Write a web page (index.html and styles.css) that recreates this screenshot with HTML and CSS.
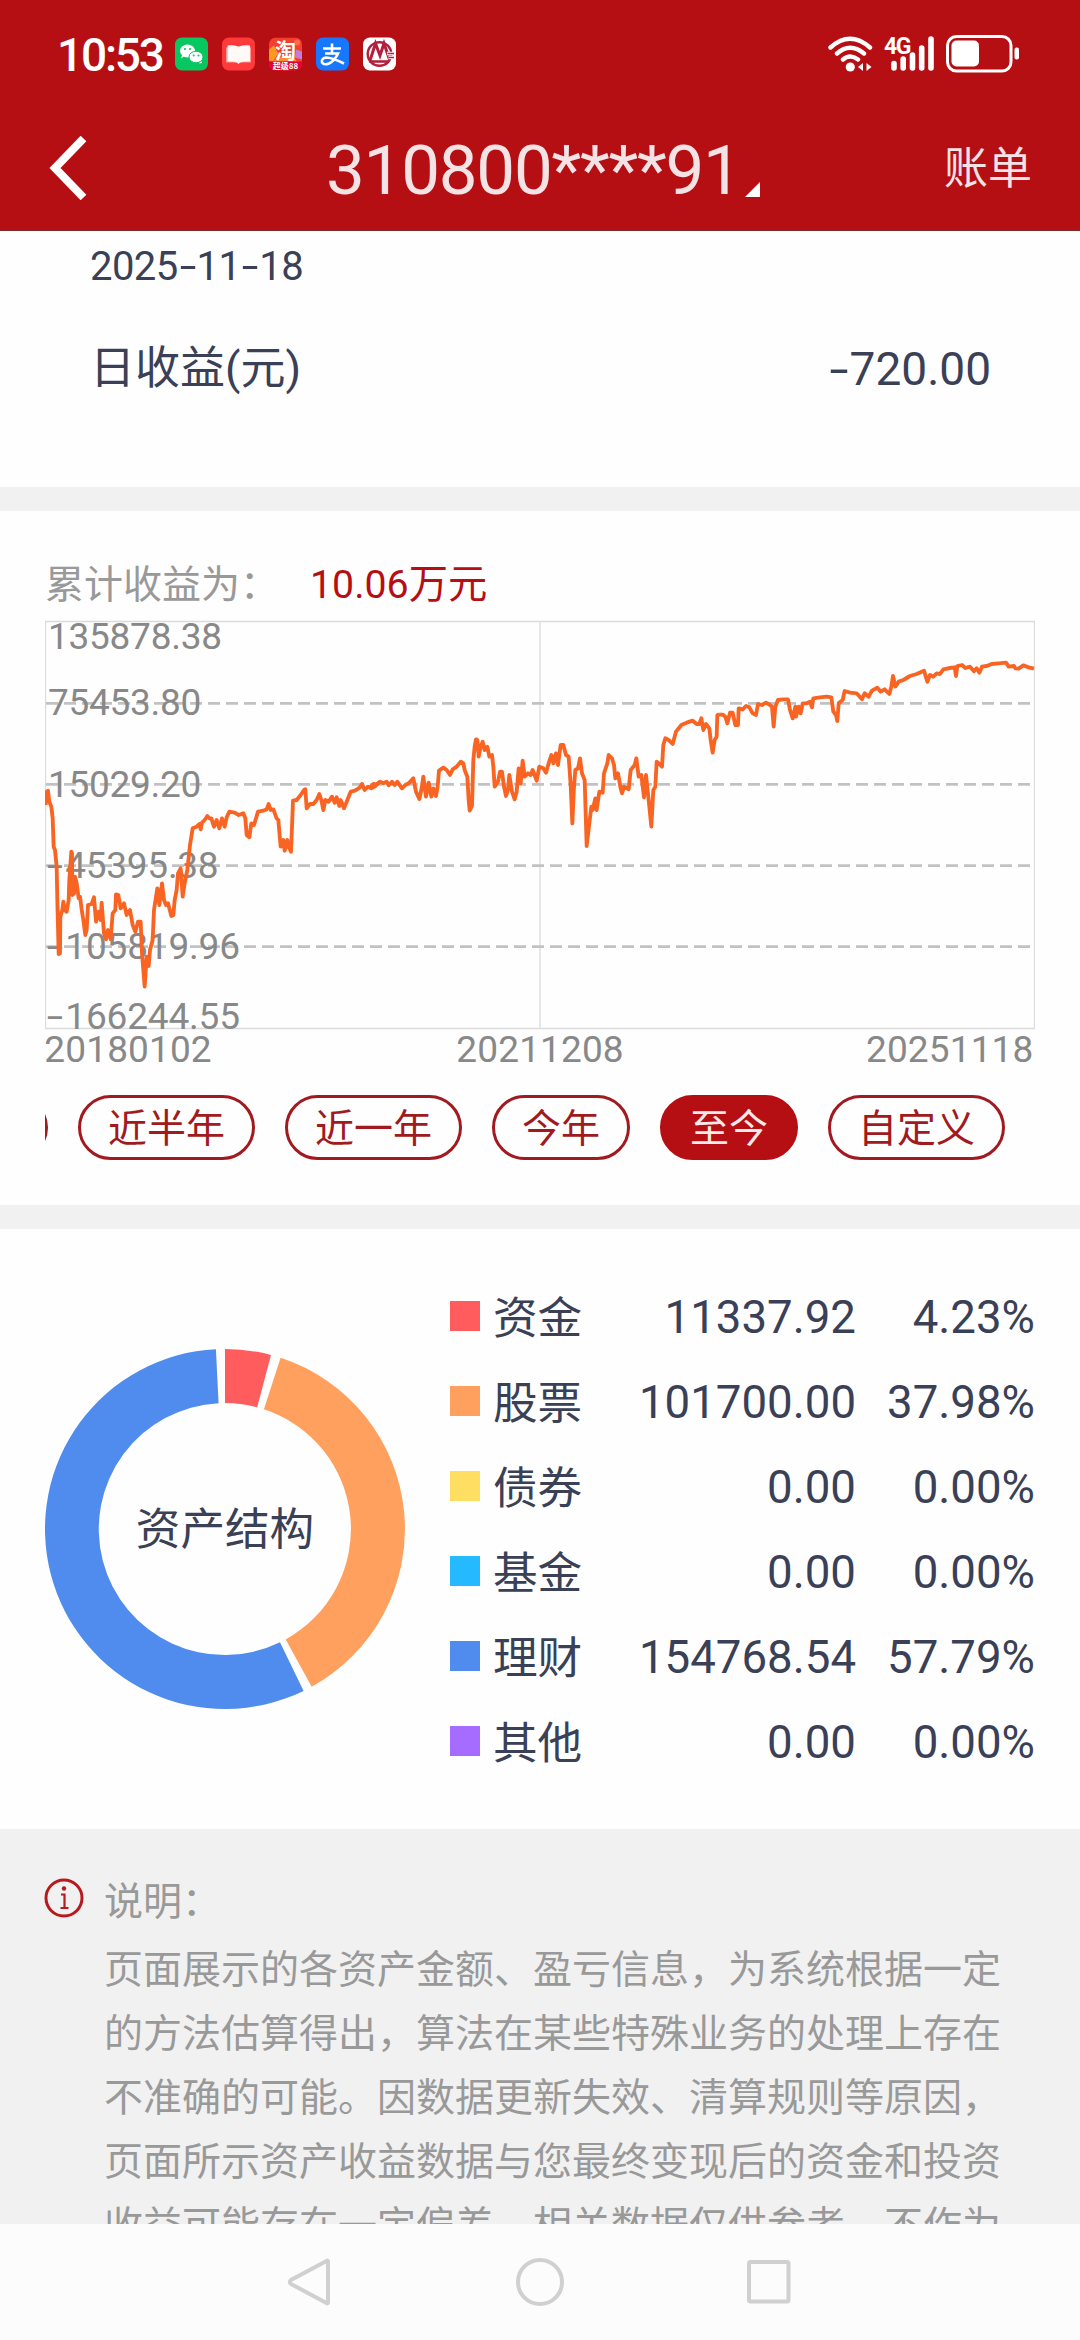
FILE: index.html
```html
<!DOCTYPE html>
<html lang="zh-CN">
<head>
<meta charset="utf-8">
<title>账户收益</title>
<link rel="stylesheet" href="styles.css">
</head>
<body>
<div class="screen">
  <div class="status">
    <span class="clock">10:53</span>
    <div class="apps">
      <svg class="app" viewBox="0 0 33 33"><rect width="33" height="33" rx="7" fill="#07c860"/><path d="M6 21l1.500-4h4zM24 26l3-.5-1-3z" fill="#fff"/><ellipse cx="12.500" cy="13.500" rx="7.500" ry="6.500" fill="#fff"/><ellipse cx="21" cy="19.500" rx="7" ry="5.800" fill="#fff" stroke="#07c860" stroke-width="1"/><g fill="#07c860"><circle cx="10" cy="11.500" r="1.100"/><circle cx="15" cy="11.500" r="1.100"/><circle cx="18.700" cy="18" r="1"/><circle cx="23.500" cy="18" r="1"/></g></svg>
      <svg class="app" viewBox="0 0 33 33"><rect width="33" height="33" rx="7" fill="#ff3a3a"/><path d="M4 10h25v15H4z" fill="#ff9a98"/><path d="M5.500 8q6-1 10 .8q1 .4 2 0Q22 7 28 8v16q-6-.5-10 1l-1.500 1.500L15 25q-4-1.500-9.500-1z" fill="#fffaf8"/></svg>
      <svg class="app" viewBox="0 0 33 33"><defs><clipPath id="r"><rect width="33" height="33" rx="7"/></clipPath></defs><g clip-path="url(#r)"><rect width="33" height="33" fill="#f2402e"/><path d="M0 12l5-4 4 8-5 8-4-1z" fill="#ff9a1f"/><path d="M27 12l6 2v8l-7-2z" fill="#c57ae0"/><path d="M9 20l14-2 5 6H4z" fill="#ff8a3c"/><circle cx="28" cy="5" r="3" fill="#ff6a4a"/><rect y="24" width="33" height="9" fill="#e5002f"/></g><text class="app-tao" x="16.500" y="20">淘</text><text class="app-tag" x="16.500" y="31.500">超级88</text></svg>
      <svg class="app" viewBox="0 0 33 33"><rect width="33" height="33" rx="7" fill="#1777ff"/><path d="M7 11h18M16 6v10M9 16h13q-3 7-9 10q-5 2-7-1q-1-4 4-5q6 0 18 6" fill="none" stroke="#fff" stroke-width="2.600"/></svg>
      <svg class="app" viewBox="0 0 33 33"><rect width="33" height="33" rx="7" fill="#fff"/><circle cx="16.500" cy="16.500" r="11.800" fill="none" stroke="#b4203c" stroke-width="2.400"/><path d="M7 23L12.500 6l4.500 12L21 6l5.500 16" fill="none" stroke="#b4203c" stroke-width="3"/><path d="M10 21l2.500-6 2.500 6" fill="#fff"/><path d="M6 24h20" stroke="#b4203c" stroke-width="2.600"/><path d="M24 16h9M25.500 20h7.500" stroke="#fff" stroke-width="3.400"/><path d="M24.500 16h6.500M25.500 20h5.500" stroke="#b4203c" stroke-width="1.400"/></svg>
    </div>
    <svg class="signals" viewBox="0 0 194 40">
      <g fill="none" stroke="#fff" stroke-width="4.400" stroke-linecap="round"><path d="M2.500 12.500Q22 -5 42 12.500M9 18.500Q22 7 36 18.500M15 24.500Q22 18.500 30 24.500"/></g>
      <circle cx="22.300" cy="32" r="4.600" fill="#fff"/>
      <path d="M30 32l5-4v8zM43.500 32l-5-4v8z" fill="#fff"/>
      <text class="net" x="56" y="18.500">4G</text>
      <path d="M66 28.500v4.500M75.200 24v9M84.500 20v13M93.700 13v20M103 4v29" stroke="#fff" stroke-width="5.600" stroke-linecap="round"/>
      <rect x="119.500" y="1.500" width="63.500" height="34.500" rx="9" fill="none" stroke="#fff" stroke-width="3"/>
      <rect x="123.500" y="5.500" width="27.500" height="26" rx="5" fill="#fff"/>
      <rect x="186.500" y="12.500" width="4.500" height="12" rx="2" fill="#fff"/>
    </svg>
  </div>
  <header class="header">
    <svg class="back" viewBox="0 0 40 64"><path d="M35.500 2.500L7 32l28.500 29.500" fill="none" stroke="#fff" stroke-width="8"/></svg>
    <h1 class="account">310800****91<svg class="corner" viewBox="0 0 15 15"><path d="M15 0v15H0z" fill="#fff"/></svg></h1>
    <span class="bill">账单</span>
  </header>

  <main class="content">
    <section class="daily">
      <div class="date">2025<span class="dash">-</span>11<span class="dash">-</span>18</div>
      <div class="daily-row"><span class="daily-label">日收益(元)</span><span class="daily-value"><span class="dash">-</span>720.00</span></div>
    </section>

    <section class="trend">
      <div class="total"><span class="total-label">累计收益为：</span><span class="total-value">10.06万元</span></div>
      <svg class="chart" viewBox="45 60 2970 1350">
        <path class="frame" d="M46.500 64.500H3013.500V1285.500H46.500zM1530 64.500V1285.500"/>
        <path class="grid" d="M48 310H3012M48 553H3012M48 797H3012M48 1040H3012"/>
        <g class="axis">
          <text x="54" y="147" textLength="522">135878.38</text>
          <text x="54" y="344" textLength="460">75453.80</text>
          <text x="54" y="590" textLength="460">15029.20</text>
          <text x="106" y="833" textLength="460">45395.38</text>
          <text x="106" y="1076" textLength="524">105819.96</text>
          <text x="106" y="1287" textLength="524">166244.55</text>
          <text x="43" y="1386" textLength="502">20180102</text>
          <text x="1279" y="1386" textLength="502">20211208</text>
          <text x="2508" y="1386" textLength="502">20251118</text>
          <text transform="translate(50 833) scale(1.600 1)">-</text>
          <text transform="translate(50 1076) scale(1.600 1)">-</text>
          <text transform="translate(50 1287) scale(1.600 1)">-</text>
        </g>
        <g class="line">
          <polyline points="47,615 50,575 54,572 58,605 64,620 68,655 71,740 75,750 80,800 82,900 86,1062 90,1060 91,950 97,930 100,905 104,930 110,935 116,900 118,840 124,755 126,760 127,885 132,880 135,830 140,850 146,895 150,890 156,935 160,960 166,1005 170,990 174,915 185,912 192,892 198,965 206,935 212,960 215,908 222,1000 228,1018 234,990 242,1018 248,940 256,930 258,883 265,885 272,925 282,910 290,945 300,930 308,975 316,995 324,965 332,965 336,1060 344,1160 350,1070 356,1098 360,1050 368,1020 372,930 382,865 388,915 396,850 402,900 408,915 414,910 424,948 430,945 434,900 440,870 444,820 452,805 458,890 464,850 472,810 480,735 488,685 500,680 508,672 512,688 516,668 524,660 532,648 538,655 544,655 552,680 560,660 568,685 576,655 584,680 590,652 598,635 614,638 626,645 640,640 646,655 650,705 658,712 664,670 672,675 684,635 700,632 710,628 716,612 722,630 730,628 740,655 745,660 752,740 760,720 764,752 772,720 778,745 783,755 786,680 789,602 800,600 812,585 822,570 826,568 830,625 840,612 850,612 860,600 868,582 874,600 880,630 886,600 896,605 906,590 914,608 920,592 928,618 932,600 942,625 950,605 962,575 975,572 990,562 996,552 1004,570 1014,560 1024,565 1036,558 1050,545"/>
          <polyline transform="translate(1020 0)" points="0,562 10,552 20,553 30,545 40,550 50,545 56,556 66,545 74,555 82,545 96,565 106,555 116,550 130,535 138,575 148,597 154,570 160,530 168,590 176,548 184,590 190,565 198,588 203,560 207,512 220,503 230,510 240,525 248,508 260,500 272,485 280,490 284,510 292,530 296,600 299,632 306,618 310,480 314,440 318,418 322,420 326,470 332,440 338,425 344,450 352,440 358,470 366,465 370,500 374,560 384,545 390,515 396,515 402,560 408,588 414,570 418,525 426,575 434,598 440,575 446,505 452,550 458,482 464,530 474,520 482,525 488,510 500,542 508,500 520,505 528,518 536,490 544,465 550,490 558,460 564,495 572,435 580,435 588,465 596,470 602,555 607,670 612,560 616,510 624,505 630,475 636,520 644,540 650,738 658,670 664,620 668,630 676,595 680,630 688,575 698,578 702,520 712,490 716,465 726,475 732,495 736,535 744,520 752,565 756,580 762,560 776,568 782,510 794,495 799,475 806,530 814,525 822,592 828,525 836,600 844,680 850,570 856,560 860,485 866,490 876,500 880,435 886,415 896,420 908,432 918,395 934,375 950,368 968,362 980,372 988,372 994,355 1000,390 1008,372 1018,385 1022,420 1028,458 1034,420 1040,410 1042,345 1050,343"/>
          <polyline transform="translate(2040 0)" points="30,343 40,345 46,350 52,370 60,338 68,338 76,375 84,375 86,325 98,328 108,318 118,322 128,340 138,345 144,312 156,315 168,308 180,315 186,320 191,380 196,320 204,300 220,298 234,298 240,330 248,355 256,320 258,350 266,320 272,340 278,310 290,310 300,305 306,322 310,295 330,292 350,290 364,292 370,335 378,345 382,363 386,310 398,300 404,273 420,278 440,280 456,298 464,280 476,290 486,272 502,263 512,275 524,268 538,282 544,260 549,228 556,260 566,245 580,240 600,228 620,222 642,212 652,245 660,225 670,230 680,220 690,222 700,208 720,204 734,202 738,228 742,198 756,195 766,204 780,200 792,214 800,205 808,218 816,200 830,198 845,192 866,190 888,188 896,200 912,198 916,205 926,206 940,196 956,202 972,206"/>
        </g>
      </svg>
      <div class="ranges">
        <span class="pill sliver"></span>
        <span class="pill">近半年</span>
        <span class="pill">近一年</span>
        <span class="pill">今年</span>
        <span class="pill active">至今</span>
        <span class="pill">自定义</span>
      </div>
    </section>

    <section class="assets">
      <div class="donut">
        <svg viewBox="-180 -180 360 360">
          <path fill="#ff5c5d" d="M0-180A180 180 0 0 1 46-174L32.200-121.800A126 126 0 0 0 0-126z"/>
          <path fill="#ffa05e" d="M55.600-171.200A180 180 0 0 1 86.700 157.700L60.700 110.400A126 126 0 0 0 38.900-119.800z"/>
          <path fill="#508ced" d="M78.600 161.900A180 180 0 1 1-9.100-179.800L-6.400-125.800A126 126 0 1 0 55 113.300z"/>
        </svg>
        <span class="donut-title">资产结构</span>
      </div>
      <div class="legend">
        <div class="item"><i class="swatch red"></i><span class="name">资金</span><span class="amount">11337.92</span><span class="share">4.23%</span></div>
        <div class="item"><i class="swatch orange"></i><span class="name">股票</span><span class="amount">101700.00</span><span class="share">37.98%</span></div>
        <div class="item"><i class="swatch yellow"></i><span class="name">债券</span><span class="amount">0.00</span><span class="share">0.00%</span></div>
        <div class="item"><i class="swatch cyan"></i><span class="name">基金</span><span class="amount">0.00</span><span class="share">0.00%</span></div>
        <div class="item"><i class="swatch blue"></i><span class="name">理财</span><span class="amount">154768.54</span><span class="share">57.79%</span></div>
        <div class="item"><i class="swatch purple"></i><span class="name">其他</span><span class="amount">0.00</span><span class="share">0.00%</span></div>
      </div>
    </section>

    <section class="notes">
      <svg class="info" viewBox="0 0 40 40"><circle cx="20" cy="20" r="18" fill="none" stroke="#b8191e" stroke-width="3"/><circle cx="20" cy="10.500" r="2.200" fill="#b8191e"/><path d="M17 16.500h3.500V30M16.500 30h8" fill="none" stroke="#b8191e" stroke-width="2.200"/></svg>
      <div class="notes-text">
        <div class="notes-title">说明：</div>
        <p>页面展示的各资产金额、盈亏信息，为系统根据一定<br>的方法估算得出，算法在某些特殊业务的处理上存在<br>不准确的可能。因数据更新失效、清算规则等原因，<br>页面所示资产收益数据与您最终变现后的资金和投资<br>收益可能存在一定偏差，相关数据仅供参考，不作为</p>
      </div>
    </section>
  </main>

  <nav class="nav">
    <svg viewBox="0 0 50 50"><path d="M42 4.500V45.500Q42 47 40.500 46L5 27Q2.500 25 5 23L40.500 4Q42 3 42 4.500z"/></svg>
    <svg viewBox="0 0 50 50"><circle cx="25" cy="25" r="22"/></svg>
    <svg viewBox="0 0 50 50"><rect x="5" y="5" width="39.500" height="39.500" rx="1.500"/></svg>
  </nav>
</div>
</body>
</html>
```
FILE: styles.css
```css
* { box-sizing: border-box; }
body { margin: 0; font-family: Roboto, "Noto Sans CJK SC", sans-serif; color: #3a4056; }
svg { display: block; }
.screen { width: 1080px; height: 2340px; display: flex; flex-direction: column; overflow: hidden; background: #fefefe; }

.status { height: 106px; flex: none; display: flex; align-items: flex-start; padding: 35px 58px 0 57px; background: #b50f14; color: #fff; }
.clock { width: 118px; font-size: 46px; font-weight: 500; line-height: 40px; letter-spacing: -2.200px; }
.apps { display: flex; gap: 14px; padding-top: 2px; flex: 1; }
.app { width: 33px; height: 34px; }
.app-tao { font: 700 21px "Noto Sans CJK SC", sans-serif; fill: #fff; text-anchor: middle; }
.app-tag { font: 700 8px "Noto Sans CJK SC", sans-serif; fill: #fff; text-anchor: middle; }
.signals { width: 194px; height: 40px; }
.net { font: 700 23px Roboto, sans-serif; fill: #fff; letter-spacing: -1.500px; }

.header { height: 125px; flex: none; display: flex; align-items: center; padding: 2px 48px 0 46px; background: #b50f14; border-bottom: 1px solid #7c2a2f; color: #f3e3e5; }
.back { width: 40px; height: 64px; margin: -3px 0 0 2px; }
.account { flex: 1; display: flex; align-items: flex-end; margin: 3px 0 0; padding-left: 238px; font-size: 69px; font-weight: 400; line-height: 80px; letter-spacing: -1.200px; }
.corner { width: 15px; height: 15px; margin: 0 0 14px 4px; }
.bill { font-size: 44px; line-height: 60px; }

.content { flex: 1; min-height: 0; overflow: hidden; }
.dash { display: inline-block; transform: scaleX(1.500); }
.daily { height: 256px; padding: 11px 90px 0; }
.date { font-size: 40px; line-height: 50px; letter-spacing: -.6px; }
.date .dash { width: 19px; text-align: center; }
.daily-row { display: flex; justify-content: space-between; margin-top: 47px; line-height: 60px; }
.daily-label { font-size: 45px; }
.daily-value { font-size: 46px; margin-right: -1px; }
.daily-value .dash { width: 22px; text-align: center; }

.trend { height: 718px; border-top: 24px solid #f1f1f1; padding: 49px 45px 0; }
.total { display: flex; line-height: 50px; height: 60px; font-size: 39px; }
.total-label { width: 265px; color: #999; }
.total-value { color: #b50f14; font-size: 39.300px; }
.chart { width: 990px; height: 450px; }
.frame { fill: none; stroke: #dcdcdc; stroke-width: 4; }
.grid { fill: none; stroke: #c2c2c2; stroke-width: 8.500; stroke-dasharray: 36 18; }
.axis { font-size: 111px; fill: #888; }
.line { fill: none; stroke: #f96423; stroke-width: 11.500; stroke-linejoin: round; }
.ranges { display: flex; gap: 30px; margin-top: 25px; overflow: hidden; }
.pill { flex: none; height: 65px; padding: 0 27px; border: 3px solid #a01a20; border-radius: 33px; font-size: 39px; line-height: 62px; color: #a01a20; }
.sliver { width: 80px; margin-left: -77px; }
.active { background: #b50f14; border-color: #b50f14; color: #fbe9e9; }

.assets { height: 624px; border-top: 24px solid #f1f1f1; display: flex; padding: 0 45px; }
.donut { display: grid; place-items: center; width: 360px; height: 360px; margin: 120px 45px 0 0; }
.donut > * { grid-area: 1 / 1; }
.donut svg { width: 360px; height: 360px; }
.donut-title { font-size: 44.600px; padding-bottom: 7px; }
.legend { flex: 1; padding-top: 46px; }
.item { display: grid; grid-template-columns: 43px 100px 1fr 179px; align-items: center; height: 85px; font-size: 45.600px; text-align: right; }
.swatch { width: 30px; height: 30px; margin-top: -4px; }
.name { font-size: 44.600px; text-align: left; padding-bottom: 6px; }
.red { background: #ff5c5d; }
.orange { background: #ffa05e; }
.yellow { background: #ffde62; }
.cyan { background: #25b9ff; }
.blue { background: #508ced; }
.purple { background: #a56cff; }

.notes { height: 600px; display: flex; padding: 48px 0 0 44px; background: #f1f1f1; font-size: 39px; line-height: 64px; color: #999; }
.info { width: 40px; height: 40px; margin: 1px 20px 0 0; }
.notes-title { line-height: 50px; }
.notes-text { white-space: nowrap; }
.notes p { margin: 11px 0 0; }

.nav { height: 116px; flex: none; display: flex; justify-content: center; gap: 179px; padding-top: 33px; background: #fcfcfc; }
.nav svg { width: 50px; height: 50px; fill: none; stroke: #d0d0d0; stroke-width: 4; }
```
